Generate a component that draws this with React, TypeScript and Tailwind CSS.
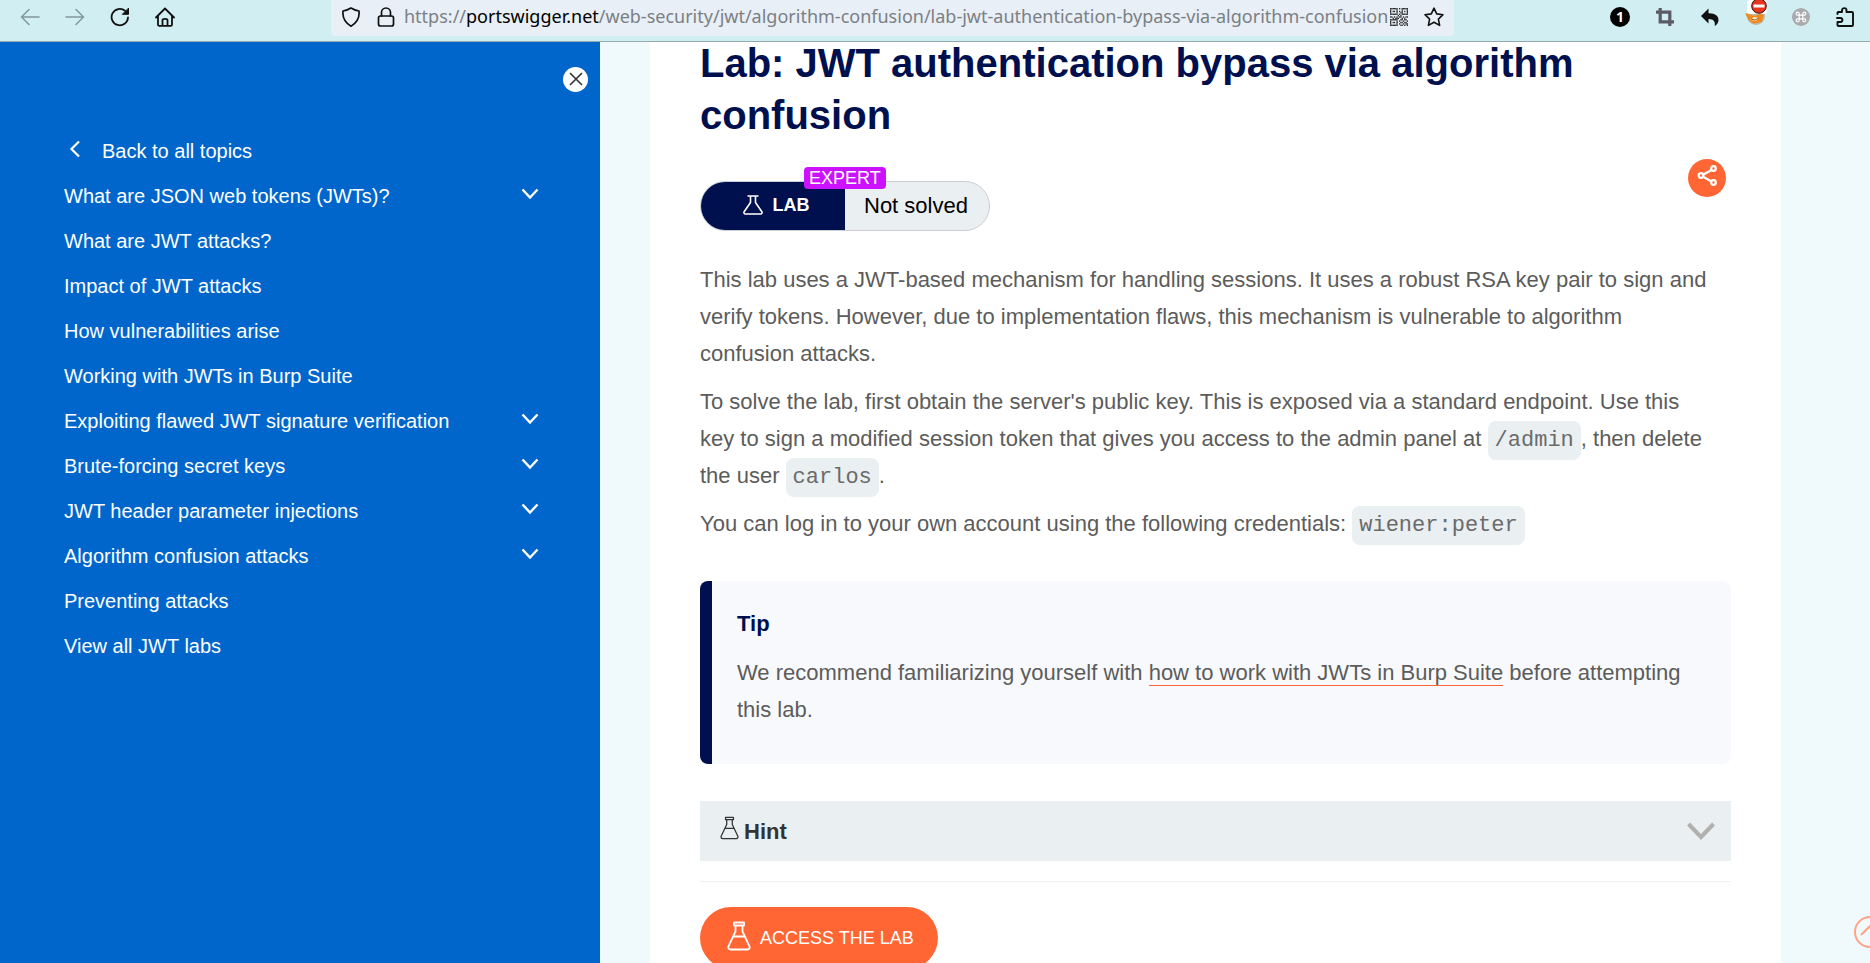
import React from "react";

type IconProps = { className?: string };

const Flask = ({ className }: IconProps) => (
  <svg viewBox="0 0 24 30" className={className} fill="none" stroke="currentColor" strokeLinejoin="round" strokeLinecap="round" aria-hidden="true">
    <path d="M7 1.500h10v3H7zM8.500 4.500v6L1.600 25.200c-.8 1.900.1 3.300 2 3.300h16.800c1.900 0 2.800-1.400 2-3.300L15.500 10.500v-6M6 15.500h12" />
  </svg>
);

const LabFlask = ({ className }: IconProps) => (
  <svg viewBox="0 0 20 20" className={className} fill="none" stroke="currentColor" strokeWidth="1.600" strokeLinejoin="round" aria-hidden="true">
    <path d="M4.500 1h11M7.500 1v6.500L1.300 16.500c-.8 1.300-.2 2.500 1.200 2.500h15c1.400 0 2-1.200 1.200-2.500L12.500 7.500V1" />
  </svg>
);

const ChevronDown = () => (
  <svg viewBox="0 0 18 12" className="h-3 w-[18px]" fill="none" stroke="currentColor" strokeWidth="2.400" aria-hidden="true">
    <path d="M1.500 1.500 9 9.500l7.500-8" />
  </svg>
);

const lineIcon = {
  fill: "none",
  stroke: "currentColor",
  strokeWidth: 1.8,
  strokeLinecap: "round" as const,
  strokeLinejoin: "round" as const,
  "aria-hidden": true,
};

const topics: { label: string; children?: boolean }[] = [
  { label: "What are JSON web tokens (JWTs)?", children: true },
  { label: "What are JWT attacks?" },
  { label: "Impact of JWT attacks" },
  { label: "How vulnerabilities arise" },
  { label: "Working with JWTs in Burp Suite" },
  { label: "Exploiting flawed JWT signature verification", children: true },
  { label: "Brute-forcing secret keys", children: true },
  { label: "JWT header parameter injections", children: true },
  { label: "Algorithm confusion attacks", children: true },
  { label: "Preventing attacks" },
  { label: "View all JWT labs" },
];

const qrRows = [
  "11111101011111",
  "10000100010001",
  "10110101010101",
  "10000100110001",
  "11111101011111",
  "00000010100000",
  "11010101101011",
  "00101110010100",
  "11111100110110",
  "10000101001001",
  "10110100110110",
  "10000101001011",
  "11111100110101",
];

function Toolbar() {
  return (
    <header className="flex h-[42px] shrink-0 items-start border-b border-[#93a9ad] bg-[#d1eef2] text-[#111]">
      <nav className="flex h-[33px] w-[331px] shrink-0 items-center gap-[25px] pl-5" aria-label="Browser navigation">
        <button aria-label="Back" className="text-[#84979a]">
          <svg viewBox="0 0 20 20" className="size-5" {...lineIcon} strokeWidth={1.5}><path d="M19 10H2M9 2.500 1.500 10 9 17.500" /></svg>
        </button>
        <button aria-label="Forward" className="text-[#84979a]">
          <svg viewBox="0 0 20 20" className="size-5" {...lineIcon} strokeWidth={1.5}><path d="M1 10h17M11 2.500l7.500 7.500-7.500 7.500" /></svg>
        </button>
        <button aria-label="Reload">
          <svg viewBox="0 0 20 20" className="size-5" {...lineIcon}><path d="M18 10.500a8.200 8.200 0 1 1-2.800-6.600" /><path d="M18.500 1.500v5.800h-5.800z" fill="currentColor" strokeWidth={1} /></svg>
        </button>
        <button aria-label="Home">
          <svg viewBox="0 0 20 20" className="size-5" {...lineIcon}><path d="M1 10.500 10 1.500l9 9M3 9v8.500c0 .8.500 1.300 1.300 1.300h11.400c.8 0 1.300-.5 1.300-1.300V9M7.500 18.500V13c0-1.600 5-1.600 5 0v5.500" /></svg>
        </button>
      </nav>

      <div className="flex h-9 min-w-0 flex-1 items-center rounded-b bg-[#e8eff6] px-[10px] pb-[3px]">
        <button aria-label="Tracking protection" className="shrink-0">
          <svg viewBox="0 0 20 20" className="size-5" {...lineIcon} strokeWidth={1.700}><path d="M10 1C7.500 2.600 4.800 3.600 2 4c-.6 5.500 1.500 11.500 8 15.200C16.500 15.500 18.600 9.500 18 4c-2.800-.4-5.500-1.400-8-3z" /></svg>
        </button>
        <button aria-label="Site information" className="ml-[15px] shrink-0">
          <svg viewBox="0 0 20 20" className="size-5" {...lineIcon} strokeWidth={1.700}><rect x="2.500" y="9" width="15" height="10" rx="2" /><path d="M5.500 9V5.500a4.500 4.500 0 0 1 9 0V9" /></svg>
        </button>
        <div
          role="textbox"
          aria-label="Address"
          tabIndex={0}
          className="ml-2 min-w-0 flex-1 overflow-hidden pb-px whitespace-nowrap font-['Noto_Sans',sans-serif] text-lg leading-6 text-[#7b8084]"
        >
          https://<span className="text-black">portswigger.net</span>/web-security/jwt/algorithm-confusion/lab-jwt-authentication-bypass-via-algorithm-confusion
        </div>
        <button aria-label="QR code" className="shrink-0">
          <svg viewBox="0 0 14 13" preserveAspectRatio="none" className="size-[18px]" fill="#2b2b2b" aria-hidden="true">
            {qrRows.flatMap((row, y) =>
              row.split("").map((cell, x) => (cell === "1" ? <rect key={x + "-" + y} x={x} y={y} width="1" height="1" /> : null)),
            )}
          </svg>
        </button>
        <button aria-label="Bookmark" className="ml-4 shrink-0">
          <svg viewBox="0 0 20 20" className="size-5" {...lineIcon} strokeWidth={1.600}><path d="m10 1.200 2.700 5.700 6.300.8-4.600 4.400 1.200 6.300-5.600-3.100-5.600 3.100 1.200-6.300L1 7.700l6.300-.8z" /></svg>
        </button>
      </div>

      <div className="flex h-[33px] w-[416px] shrink-0 items-center justify-end gap-[25px] pr-[15px]">
        <button aria-label="Notifications" className="size-5 rounded-full bg-black font-['Open_Sans',sans-serif] text-sm leading-5 font-bold text-white">1</button>
        <button aria-label="Crop">
          <svg viewBox="0 0 20 20" className="size-5" fill="none" stroke="#5b5b66" strokeWidth="3.200" aria-hidden="true"><path d="M1 5.200h13.800V19M5.200 1v13.800H19" /></svg>
        </button>
        <button aria-label="Undo">
          <svg viewBox="0 0 20 20" className="size-5" fill="currentColor" aria-hidden="true"><path d="M8.500 1.500v4.700C15.500 6 18.500 9 18.500 13c0 2.500-1.500 4.800-3.800 6 .9-4.200-1-7-6.200-7v4.500L1 9z" /></svg>
        </button>
        <button aria-label="Proxy" className="h-[33px]">
          <svg viewBox="0 0 22 33" className="h-[33px] w-[22px]" aria-hidden="true">
            <circle cx="11" cy="16" r="9" fill="#c3b6a8" />
            <path d="m0 13 9 3 10-3-2 9-8 1.500-5-2.500z" fill="#ef8a1d" />
            <path d="m5 20 4-3 5 1-3 3z" fill="#fff0d8" />
            <path d="m6 19 4 1 4-2" fill="none" stroke="#a3520d" />
            <rect x="2" y="0" width="20" height="14" rx="3" fill="#fff" />
            <circle cx="14" cy="6" r="7.300" fill="#e8351b" stroke="#2b1410" strokeWidth="1" />
            <rect x="8.500" y="4.500" width="11" height="3" fill="#fff" />
          </svg>
        </button>
        <button aria-label="Shortcuts">
          <svg viewBox="0 0 20 20" className="size-[18px]" aria-hidden="true">
            <circle cx="10" cy="10" r="10" fill="#aaabad" />
            <path d="M8 8v4h4V8zM8 8H6.300A1.700 1.700 0 1 1 8 6.300zM12 8V6.300A1.700 1.700 0 1 1 13.700 8zM12 12h1.700A1.700 1.700 0 1 1 12 13.700zM8 12v1.700A1.700 1.700 0 1 1 6.300 12z" fill="none" stroke="#fff" strokeWidth="1.300" />
          </svg>
        </button>
        <button aria-label="Extensions">
          <svg viewBox="0 0 20 20" className="size-5" {...lineIcon} strokeWidth={1.900}><path d="M2.500 7V5.800c0-.5.300-.8.800-.8H7V3.400C7 .4 11.500.4 11.500 3.400V5H17c.6 0 1 .4 1 1v12c0 .6-.4 1-1 1H3.500c-.6 0-1-.4-1-1v-3h2.800c2.800 0 2.800-4 0-4H2" /></svg>
        </button>
      </div>
    </header>
  );
}

function Sidebar() {
  return (
    <aside className="flex w-[600px] shrink-0 flex-col bg-[#0066cc] text-white">
      <div className="flex h-[87px] items-start justify-end pt-[25px] pr-3">
        <button aria-label="Close menu" className="flex size-[25px] items-center justify-center rounded-full bg-white pb-[2px] text-[#333332]">
          <svg viewBox="0 0 14 14" className="size-[14px]" fill="none" stroke="currentColor" strokeWidth="1.600" aria-hidden="true"><path d="m1 1 12 12M13 1 1 13" /></svg>
        </button>
      </div>
      <nav aria-label="Topics" className="pr-[61px] pl-16 text-[20px] leading-[45px]">
        <a href="#topics" className="flex">
          <svg viewBox="0 0 12 18" className="mt-[11px] ml-[5px] h-[18px] w-3" fill="none" stroke="currentColor" strokeWidth="2.200" aria-hidden="true"><path d="M10 1.500 2.500 9l7.500 7.500" /></svg>
          <span className="ml-[21px]">Back to all topics</span>
        </a>
        <ul>
          {topics.map((topic) => (
            <li key={topic.label} className="flex justify-between">
              <a href="#topic">{topic.label}</a>
              {topic.children && (
                <button aria-label={"Expand " + topic.label} className="pb-[6px]">
                  <ChevronDown />
                </button>
              )}
            </li>
          ))}
        </ul>
      </nav>
    </aside>
  );
}

const Code = ({ children }: { children: React.ReactNode }) => (
  <code className="rounded-lg bg-[#eaeff2] px-[7px] py-[7px] font-['Liberation_Mono',monospace] text-[22px] leading-none text-[#6b6b6a]">{children}</code>
);

function Article() {
  return (
    <article className="mr-[89px] ml-[50px] bg-white px-[50px] pb-10">
      <h1 className="-mt-[5px] text-[40px] leading-[52px] font-bold text-[#00104f]">
        Lab: JWT authentication bypass via algorithm confusion
      </h1>

      <div className="mt-[18px] flex items-start justify-between pr-[5px]">
        <div className="relative mt-[22px] flex h-[50px] rounded-full border border-[#c9cfd1] bg-[#eaeff2]">
          <div className="flex w-36 items-center justify-center gap-[10px] rounded-l-full bg-[#00104f] pb-[2px] pl-[6px] text-lg font-bold text-white">
            <LabFlask className="size-5" />
            LAB
          </div>
          <span className="absolute -top-[15px] left-[103px] rounded bg-[#cc11ff] px-[5px] text-lg leading-[22px] text-white">EXPERT</span>
          <p className="pr-[21px] pl-[19px] text-[22px] leading-12 text-black">Not solved</p>
        </div>
        <button aria-label="Share" className="size-[38px] rounded-full bg-[#ff6633] text-white">
          <svg viewBox="0 0 38 38" className="size-[38px]" fill="none" stroke="currentColor" strokeWidth="2.200" aria-hidden="true">
            <path d="m15.500 15.500 8-4.500M15.500 18l8 4.500" />
            <circle cx="13" cy="16.500" r="2.300" /><circle cx="25.500" cy="9.500" r="2.300" /><circle cx="25.500" cy="23.500" r="2.300" />
          </svg>
        </button>
      </div>

      <div className="mt-[30px] flex flex-col gap-[11px] pr-4 text-[22px] leading-[37px] text-[#5c5c5b]">
        <p>
          This lab uses a JWT-based mechanism for handling sessions. It uses a robust RSA key pair to sign and verify tokens. However, due to implementation flaws, this mechanism is vulnerable to algorithm confusion attacks.
        </p>
        <p>
          To solve the lab, first obtain the server's public key. This is exposed via a standard endpoint. Use this key to sign a modified session token that gives you access to the admin panel at <Code>/admin</Code>, then delete the user <Code>carlos</Code>.
        </p>
        <p>
          You can log in to your own account using the following credentials: <Code>wiener:peter</Code>
        </p>
      </div>

      <section className="mt-[39px] rounded-lg border-l-12 border-[#00104f] bg-[#f8f9fd] px-[25px] pt-6 pb-9 text-[22px] leading-[37px] text-[#5c5c5b]">
        <h2 className="font-bold text-[#00104f]">Tip</h2>
        <p className="mt-3">
          We recommend familiarizing yourself with{" "}
          <a href="#burp" className="border-b border-[#ff6633]">how to work with JWTs in Burp Suite</a>{" "}
          before attempting this lab.
        </p>
      </section>

      <button aria-expanded="false" className="mt-[37px] flex h-15 w-full items-center justify-between bg-[#eaeff2] pr-4 pl-5 text-[22px] font-bold text-[#333332]">
        <span className="flex items-center gap-[5px]">
          <Flask className="mb-[6px] h-6 w-[19px] stroke-[1.600]" />
          Hint
        </span>
        <svg viewBox="0 0 28 18" className="h-[18px] w-7" fill="none" stroke="#b0b0ae" strokeWidth="4" aria-hidden="true"><path d="m1.500 2 12.500 13L26.500 2" /></svg>
      </button>

      <hr className="mt-5 border-[#f0f2f2]" />

      <a href="#lab" className="mt-[25px] inline-flex h-[62px] items-center gap-[9px] rounded-full bg-[#ff6633] pr-6 pl-[27px] text-lg text-white">
        <Flask className="mb-1 h-[30px] w-6 stroke-[1.800]" />
        ACCESS THE LAB
      </a>
    </article>
  );
}

export default function App() {
  return (
    <div className="flex h-screen flex-col overflow-hidden font-['Liberation_Sans',Arial,sans-serif]">
      <Toolbar />
      <div className="flex min-h-0 flex-1 bg-[#f0fafc]">
        <Sidebar />
        <main className="min-w-0 flex-1 overflow-y-auto [scrollbar-width:none]">
          <Article />
        </main>
      </div>
      <button aria-label="Back to top" className="fixed -right-4 bottom-[15px] flex size-8 items-center justify-center rounded-full border-2 border-[#ffa384] text-[#ffa384]">
        <svg viewBox="0 0 20 12" className="mb-1 h-3 w-5 shrink-0" fill="none" stroke="currentColor" strokeWidth="2" aria-hidden="true"><path d="m1 11 9-9 9 9" /></svg>
      </button>
    </div>
  );
}
